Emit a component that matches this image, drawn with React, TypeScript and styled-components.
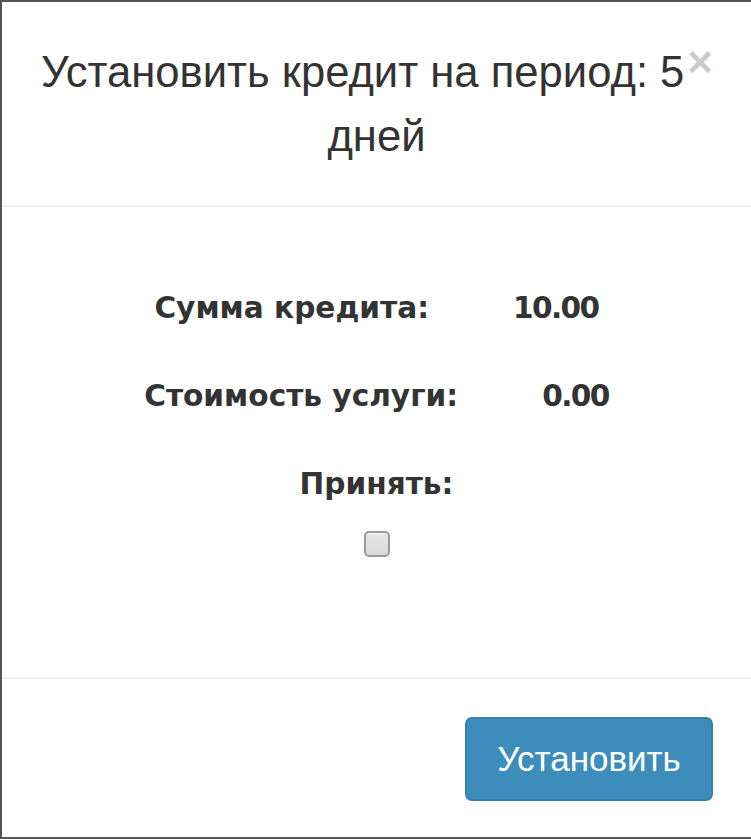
import React from "react";
import styled, { createGlobalStyle } from "styled-components";

const Global = createGlobalStyle`
  html, body { margin: 0; padding: 0; background: #fff; }
  body { font-family: "Liberation Sans", Arial, sans-serif; color: #333; }
  * { box-sizing: border-box; }
`;

const Modal = styled.div`
  width: 751px;
  height: 839px;
  border-top: 2px solid #555;
  border-left: 2px solid #555;
  border-bottom: 2px solid #555;
  background: #fff;
  display: flex;
  flex-direction: column;
`;

const Header = styled.div`
  padding: 38px 36px 37px 36px;
  border-bottom: 2px solid #eeeeee;
  text-align: center;
`;

const Close = styled.button`
  float: right;
  margin: 0 2px 0 0;
  padding: 0;
  border: 0;
  background: transparent;
  font-family: "Liberation Sans", Arial, sans-serif;
  font-size: 44px;
  font-weight: bold;
  line-height: 1;
  color: #000;
  opacity: 0.2;
  cursor: pointer;
`;

const Title = styled.h4`
  margin: 0;
  font-family: "Liberation Sans", Arial, sans-serif;
  font-size: 43.6px;
  font-weight: normal;
  line-height: 64px;
  color: #333;
`;

const Body = styled.div`
  flex: 1;
  padding: 57px 36px 0;
  display: flex;
  flex-direction: column;
  align-items: center;
  border-bottom: 2px solid #eeeeee;
`;

const Row = styled.div`
  display: flex;
  justify-content: center;
  align-items: center;
  gap: 84px;
  height: 88px;
  font-family: "DejaVu Sans", Verdana, sans-serif;
  font-weight: bold;
  font-size: 29.6px;
  color: #333;
`;

const Label = styled.span``;
const Value = styled.span`
  letter-spacing: -1.6px;
`;

const Check = styled.input`
  appearance: none;
  margin: 3px 0 0;
  width: 26px;
  height: 26px;
  border: 2px solid #9a9a9a;
  border-radius: 5px;
  background: linear-gradient(#e8e8e8, #d9d9d9);
  box-shadow: inset 0 1px 0 #f6f6f6;
`;

const Footer = styled.div`
  display: flex;
  justify-content: flex-end;
  padding: 38px 38px 36px;
`;

const Button = styled.button`
  width: 248px;
  height: 84px;
  border: 2px solid #367fa9;
  border-radius: 7px;
  background: #3c8dbc;
  color: #fff;
  font-family: "Liberation Sans", Arial, sans-serif;
  font-size: 35px;
  cursor: pointer;
`;

export default function App() {
  return (
    <>
      <Global />
      <Modal>
        <Header>
          <Close aria-label="Close">×</Close>
          <Title>Установить кредит на период: 5 дней</Title>
        </Header>
        <Body>
          <Row>
            <Label>Сумма кредита:</Label>
            <Value>10.00</Value>
          </Row>
          <Row>
            <Label>Стоимость услуги:</Label>
            <Value>0.00</Value>
          </Row>
          <Row>
            <Label>Принять:</Label>
          </Row>
          <Check type="checkbox" />
        </Body>
        <Footer>
          <Button>Установить</Button>
        </Footer>
      </Modal>
    </>
  );
}
